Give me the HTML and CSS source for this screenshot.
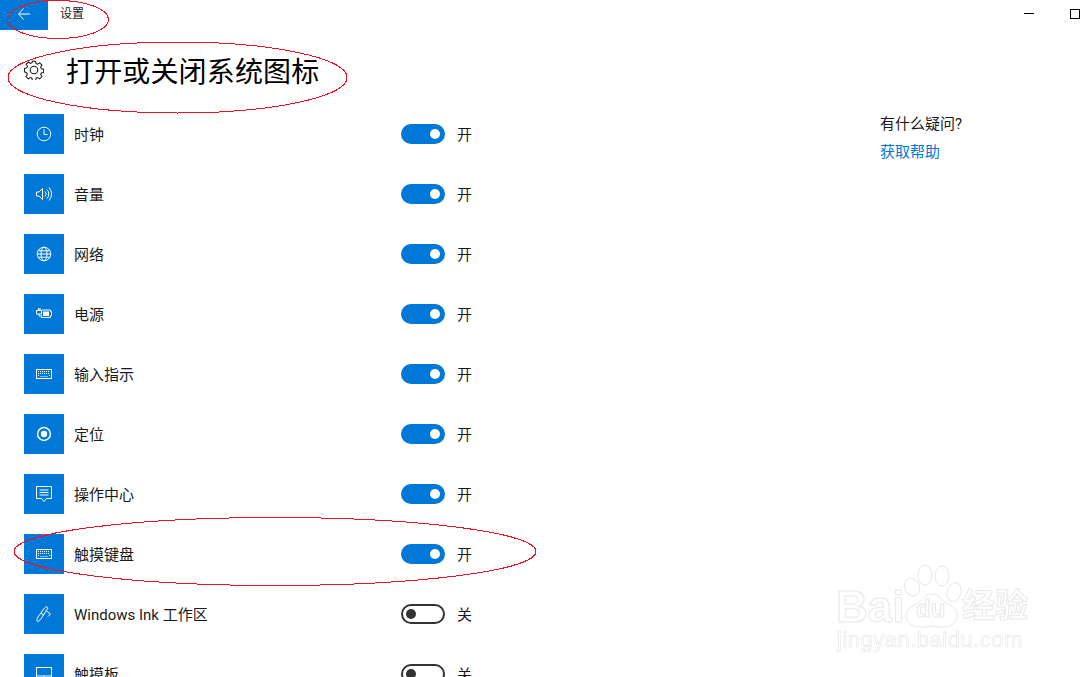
FILE: index.html
```html
<!DOCTYPE html>
<html lang="zh-CN">
<head>
<meta charset="utf-8">
<title>设置</title>
<link rel="stylesheet" href="styles.css">
</head>
<body>
<div class="window">
  <header class="titlebar">
    <div class="back"><svg width="12" height="12" viewBox="0 0 12 12"><path d="M5.500 .5 .7 6 5.500 11.500M.7 6H12" /></svg></div>
    <span class="app-name">设置</span>
    <div class="controls"><span class="min"></span><span class="max"></span></div>
  </header>
  <div class="heading">
    <svg class="gear" width="20" height="20" viewBox="0 0 20 20"><path d="M8.300 .7h3.400l.5 2.500 1.700.7 2.100-1.400 2.400 2.400-1.400 2.100.7 1.700 2.500.5v3.400l-2.500.5-.7 1.700 1.400 2.100-2.400 2.400-2.100-1.400-1.700.7-.5 2.500H8.300l-.5-2.500-1.700-.7-2.100 1.400-2.400-2.400 1.400-2.100-.7-1.700L-.1 11.700V8.300l2.500-.5.7-1.700L1.700 4l2.400-2.400 2.100 1.400 1.700-.7z" transform="translate(.5 .5) scale(.95)"/><circle cx="10" cy="10" r="3.800"/></svg>
    <h1>打开或关闭系统图标</h1>
  </div>
  <div class="content">
    <ul class="list">
      <li class="row"><span class="tile"><svg viewBox="0 0 16 16"><circle cx="8" cy="8" r="6.800"/><path d="M8 3.500V8.500H11.500"/></svg></span><span class="name">时钟</span><span class="toggle on"></span><span class="state">开</span></li>
      <li class="row"><span class="tile"><svg viewBox="0 0 16 16"><path d="M.5 6H3L6.500 2.500V13.500L3 10H.5z"/><path d="M9 5.500a3.500 3.500 0 0 1 0 5M11 3.500a6.500 6.500 0 0 1 0 9M13 1.500a9.500 9.500 0 0 1 0 13"/></svg></span><span class="name">音量</span><span class="toggle on"></span><span class="state">开</span></li>
      <li class="row"><span class="tile"><svg viewBox="0 0 16 16"><circle cx="8" cy="8" r="6.800"/><ellipse cx="8" cy="8" rx="3" ry="6.800"/><path d="M1.200 8h13.600M2.200 4.800h11.600M2.200 11.200h11.600"/></svg></span><span class="name">网络</span><span class="toggle on"></span><span class="state">开</span></li>
      <li class="row"><span class="tile"><svg viewBox="0 0 16 16"><path d="M5.500 4H14.500V5.500H15.500V9.500H14.500V11.500H5.500V9.500"/><path class="solid" d="M7 5.500H13V10H7z"/><path d="M2.500 2V4.500M4 2V4.500M.5 4.500H5.500V8H.5zM3 8V10H5"/></svg></span><span class="name">电源</span><span class="toggle on"></span><span class="state">开</span></li>
      <li class="row"><span class="tile"><svg viewBox="0 0 16 16"><rect x=".5" y="3.500" width="15" height="9"/><path class="dots" d="M2 5.500h12M2 7.500h12M2 9.500h1M4.500 10.500h7M13 9.500h1"/></svg></span><span class="name">输入指示</span><span class="toggle on"></span><span class="state">开</span></li>
      <li class="row"><span class="tile"><svg viewBox="0 0 16 16"><circle class="thick" cx="8" cy="8" r="6.400"/><circle class="solid" cx="8" cy="8" r="3.200"/></svg></span><span class="name">定位</span><span class="toggle on"></span><span class="state">开</span></li>
      <li class="row"><span class="tile"><svg viewBox="0 0 16 16"><path d="M.5 .5H15.500V12.500H10.500L8 15.500 5.500 12.500H.5zM3.500 4H12.500M3.500 6.500H12.500M3.500 9H12.500"/></svg></span><span class="name">操作中心</span><span class="toggle on"></span><span class="state">开</span></li>
      <li class="row"><span class="tile"><svg viewBox="0 0 16 16"><rect x=".5" y="3.500" width="15" height="9"/><path class="dots" d="M2 5.500h12M2 7.500h12M2 9.500h1M4.500 10.500h7M13 9.500h1"/></svg></span><span class="name">触摸键盘</span><span class="toggle on"></span><span class="state">开</span></li>
      <li class="row"><span class="tile"><svg viewBox="0 0 16 16"><path d="M1.500 15.500C.5 14 1 12.500 2 11L8.500 2C9.500 .5 11.500 .5 11.800 2.200L6.500 10.500C5 13 3 15.500 1.500 15.500zM5 7 8 9.500M10.500 5 14.500 8 12 10.500"/></svg></span><span class="name">Windows Ink 工作区</span><span class="toggle"></span><span class="state">关</span></li>
      <li class="row"><span class="tile"><svg viewBox="0 0 16 16"><rect x=".5" y="1.500" width="15" height="13"/><path d="M.5 10H15.500M8 10V14.500"/></svg></span><span class="name">触摸板</span><span class="toggle"></span><span class="state">关</span></li>
    </ul>
    <aside class="help">
      <p class="question">有什么疑问?</p>
      <a class="link">获取帮助</a>
    </aside>
  </div>
</div>

<svg class="marks" width="1089" height="677" viewBox="0 0 1089 677">
  <ellipse cx="58" cy="19.500" rx="50.500" ry="19"/>
  <ellipse cx="177.500" cy="77.500" rx="169.500" ry="35.500"/>
  <ellipse cx="275" cy="551.500" rx="261" ry="34"/>
</svg>

<div class="watermark">
  <svg class="paw" width="70" height="70" viewBox="0 0 70 70">
    <ellipse cx="11" cy="25" rx="7.500" ry="9" transform="rotate(-20 11 25)"/>
    <ellipse cx="24" cy="13" rx="7" ry="10"/>
    <ellipse cx="41" cy="14" rx="7" ry="10"/>
    <ellipse cx="53" cy="30" rx="7" ry="9.500" transform="rotate(15 53 30)"/>
    <path d="M31 32C38 32 39 38 47 42C56 46 58 52 55 58C52 66 42 66 31 64C20 66 10 66 6 58C3 50 8 46 15 42C22 38 24 32 31 32z"/>
  </svg>
  <span class="wm-bai">Bai</span>
  <span class="wm-du">du</span>
  <span class="wm-cn">经验</span>
  <span class="wm-url">jingyan.baidu.com</span>
</div>
</body>
</html>
```

FILE: styles.css
```css
html, body {
  margin: 0;
  padding: 0;
  width: 1089px;
  height: 677px;
  overflow: hidden;
  background: #fff;
}
body {
  position: relative;
  font-family: Roboto, "Noto Sans CJK SC", sans-serif;
  color: #1a1a1a;
}
.window {
  height: 677px;
  overflow: hidden;
  display: flex;
  flex-direction: column;
}
.titlebar {
  height: 30px;
  flex: none;
  display: flex;
  align-items: center;
}
.back {
  width: 48px;
  height: 30px;
  background: #0078d7;
  display: flex;
  align-items: center;
  justify-content: center;
}
.back svg { fill: none; stroke: #fff; stroke-width: 1; margin-top: -2px; }
.app-name {
  margin-left: 12px;
  margin-top: -3px;
  font-size: 12px;
  line-height: 16px;
}
.controls {
  margin-left: auto;
  margin-right: 9px;
  margin-top: -3px;
  display: flex;
  align-items: center;
  gap: 36px;
}
.min { width: 10px; height: 1px; background: #000; }
.max { width: 8px; height: 8px; border: 1px solid #000; }
.heading {
  flex: none;
  height: 84px;
  padding-left: 24px;
  display: flex;
  align-items: flex-start;
}
.gear {
  margin-top: 30px;
  fill: none;
  stroke: #1a1a1a;
  stroke-width: 1.100;
}
.heading h1 {
  margin: 22px 0 0 22px;
  font-size: 28px;
  line-height: 42px;
  font-weight: 400;
  color: #000;
  letter-spacing: .15px;
}
.content {
  display: flex;
  flex: 1;
  min-height: 0;
}
.list {
  list-style: none;
  margin: 0;
  padding: 0 0 0 24px;
  width: 880px;
  flex: none;
  box-sizing: border-box;
  display: flex;
  flex-direction: column;
  gap: 20px;
}
.row {
  height: 40px;
  flex: none;
  display: flex;
  align-items: center;
}
.tile {
  width: 40px;
  height: 40px;
  background: #0078d7;
  display: flex;
  align-items: center;
  justify-content: center;
}
.tile svg {
  width: 16px;
  height: 16px;
  fill: none;
  stroke: #fff;
  stroke-width: 1;
}
.tile svg .solid { fill: #fff; stroke: none; }
.tile svg .thick { stroke-width: 1.500; }
.tile svg .dots { stroke-dasharray: 1 1; }
.name {
  width: 327px;
  margin-left: 10px;
  padding-top: 2px;
  font-size: 15px;
  line-height: 22px;
}
.toggle {
  position: relative;
  width: 44px;
  height: 20px;
  box-sizing: border-box;
  border-radius: 10px;
  border: 2px solid #333;
  background: #fff;
}
.toggle::after {
  content: "";
  position: absolute;
  left: 3px;
  top: 3px;
  width: 10px;
  height: 10px;
  border-radius: 50%;
  background: #333;
}
.toggle.on { background: #0078d7; border-color: #0078d7; }
.toggle.on::after { left: 27px; background: #fff; }
.state {
  margin-left: 12px;
  padding-top: 2px;
  font-size: 15px;
  line-height: 22px;
}
.help { margin-top: -1px; font-size: 15px; }
.question {
  margin: 0;
  line-height: 22px;
}
.link {
  display: block;
  margin-top: 6px;
  line-height: 22px;
  color: #0078d7;
}
.marks {
  position: absolute;
  left: 0;
  top: 0;
  fill: none;
  stroke: #ee1122;
  stroke-width: 1;
  shape-rendering: crispEdges;
  pointer-events: none;
}
.watermark {
  position: absolute;
  left: 0;
  top: 0;
  width: 1089px;
  height: 677px;
  pointer-events: none;
  font-family: "Liberation Sans", "Noto Sans CJK SC", sans-serif;
  color: #fff;
  -webkit-text-stroke: 1px #e8e8e8;
  filter: blur(.3px);
}
.paw {
  position: absolute;
  left: 901px;
  top: 562px;
  fill: #fff;
  stroke: #e8e8e8;
  stroke-width: 1;
}
.watermark span { position: absolute; white-space: nowrap; font-weight: 700; }
.watermark .wm-bai { left: 836px; top: 582px; font-size: 44px; line-height: 50px; }
.watermark .wm-du { left: 916px; top: 596px; font-size: 24px; line-height: 26px; }
.watermark .wm-cn { left: 962px; top: 587px; font-size: 33px; line-height: 38px; }
.watermark .wm-url { left: 837px; top: 627px; font-size: 22px; line-height: 26px; font-weight: 400; letter-spacing: .5px; -webkit-text-stroke: .7px #e8e8e8; }
```
